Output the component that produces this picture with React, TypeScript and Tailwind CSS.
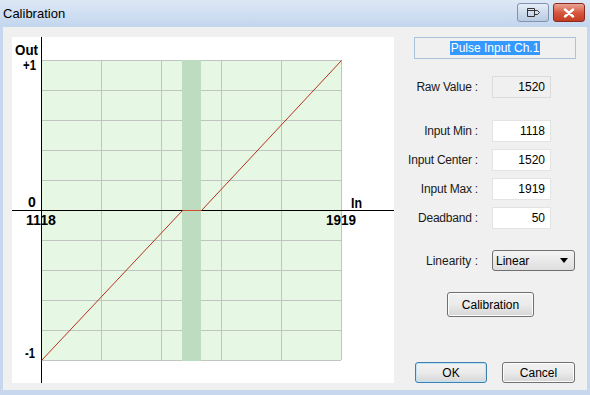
import React from "react";

const font = { fontFamily: '"Liberation Sans", Arial, sans-serif' };

// chart geometry (panel coordinates)
const X0 = 29;
const Y0 = 23;
const COL = 60;
const ROW = 30;

function Chart() {
  const vLines = [1, 2, 3, 4, 5].map((i) => X0 + i * COL);
  const hLines = Array.from({ length: 11 }, (_, i) => Y0 + i * ROW);

  return (
    <svg width="382" height="346" className="block">
      <rect x={X0} y={Y0} width={COL * 5} height={ROW * 10} fill="#e6f7e4" />
      {hLines.map((y) => (
        <line key={y} x1={X0} x2={X0 + COL * 5} y1={y + 0.5} y2={y + 0.5} stroke="#bfc6bf" />
      ))}
      {vLines.map((x) => (
        <line key={x} x1={x + 0.5} x2={x + 0.5} y1={Y0} y2={Y0 + ROW * 10} stroke="#bfc6bf" />
      ))}
      {/* deadband */}
      <rect x="170" y={Y0} width="19" height={ROW * 10 + 1} fill="#bedcbf" />

      {/* axes */}
      <line x1="29.5" x2="29.5" y1="0" y2="346" stroke="#000" />
      <line x1="0" x2="382" y1="173.5" y2="173.5" stroke="#000" />

      {/* response curve */}
      <polyline
        points="29.5,323.5 170.5,173.5 189.5,173.5 329.5,23.5"
        fill="none"
        stroke="#b8321f"
        strokeWidth="1"
      />
      <line x1="171" x2="189" y1="173.5" y2="173.5" stroke="#d0502f" />

      <g fontFamily='"Liberation Sans", Arial, sans-serif' fontWeight="bold" fontSize="14" fill="#000">
        <text x="3" y="18" textLength="23" lengthAdjust="spacingAndGlyphs">Out</text>
        <text x="11" y="33" textLength="13" lengthAdjust="spacingAndGlyphs">+1</text>
        <text x="16" y="170">0</text>
        <text x="14" y="188" textLength="30" lengthAdjust="spacingAndGlyphs">1118</text>
        <text x="314" y="188" textLength="30" lengthAdjust="spacingAndGlyphs">1919</text>
        <text x="339" y="171" textLength="11" lengthAdjust="spacingAndGlyphs">In</text>
        <text x="13" y="321" textLength="10" lengthAdjust="spacingAndGlyphs">-1</text>
      </g>
    </svg>
  );
}

function Field({ label, value, readOnly }: { label: string; value: string; readOnly?: boolean }) {
  return (
    <div className="flex items-center h-[22px]">
      <div className="w-[74px] text-right text-[12px] text-[#1a1a1a] whitespace-nowrap tracking-[-0.2px]">{label}</div>
      <div
        className={
          "ml-[14px] w-[59px] h-[22px] border flex items-center justify-end pr-[5px] text-[12px] text-black " +
          (readOnly ? "bg-[#f0f0f0] border-[#dcdcdc]" : "bg-white border-[#e3e3e3]")
        }
      >
        {value}
      </div>
    </div>
  );
}

function Button({ children, primary, className }: { children: React.ReactNode; primary?: boolean; className?: string }) {
  return (
    <div
      className={
        "flex items-center justify-center rounded-[3px] border text-[12px] text-black bg-gradient-to-b from-[#f2f2f2] via-[#ebebeb] to-[#d6d6d6] " +
        (primary ? "border-[#3c7fb1] shadow-[inset_0_0_0_1px_#bfe3f5]" : "border-[#707070] shadow-[inset_0_0_0_1px_#fcfcfc]") +
        " " +
        (className ?? "")
      }
    >
      {children}
    </div>
  );
}

export default function App() {
  return (
    <div className="w-[590px] h-[395px] bg-[#c7d8ee] flex flex-col overflow-hidden" style={font}>
      {/* Title bar */}
      <div className="h-[27px] shrink-0 flex items-center bg-gradient-to-b from-[#dde8f6] to-[#c3d6ee] pl-[3px] pr-[5px]">
        <span className="text-[13px] text-black">Calibration</span>
        <div className="ml-auto flex gap-[4px] self-start mt-[3px]">
          <div className="w-[32px] h-[19px] rounded-[3px] border border-[#7f93ad] bg-gradient-to-b from-[#e5edf7] to-[#b9cbe2] flex items-center justify-center">
            <svg width="14" height="11" viewBox="0 0 14 11">
              <path d="M1.5 1.5h7v8h-7z M1.5 3.5h7" fill="none" stroke="#333" />
              <path d="M9 3.5h2.5l2 2-2 2H9" fill="none" stroke="#333" />
            </svg>
          </div>
          <div className="w-[32px] h-[19px] rounded-[3px] border border-[#8b2b1d] bg-gradient-to-b from-[#e9a595] via-[#d6583f] to-[#c23b21] flex items-center justify-center">
            <svg width="12" height="10" viewBox="0 0 12 10">
              <path d="M2 1.5l8 7M10 1.5l-8 7" stroke="#fff" strokeWidth="2.4" strokeLinecap="round" />
            </svg>
          </div>
        </div>
      </div>

      {/* Client area */}
      <div className="mx-[3px] h-[363px] shrink-0 bg-[#f0f0f0] flex pl-[9px] pt-[10px]">
        <div className="w-[382px] h-[346px] bg-white">
          <Chart />
        </div>

        <div className="ml-[10px] w-[174px] flex flex-col">
          <div className="ml-[10px] w-[162px] h-[22px] border border-[#a9c3da] bg-[#f0f0f0] flex items-center justify-center">
            <span className="bg-[#3399ff] text-white text-[12px] leading-[14px] px-[1px]">Pulse Input Ch.1</span>
          </div>

          <div className="mt-[17px]">
            <Field label="Raw Value :" value="1520" readOnly />
          </div>

          <div className="mt-[22px] flex flex-col gap-[7px]">
            <Field label="Input Min :" value="1118" />
            <Field label="Input Center :" value="1520" />
            <Field label="Input Max :" value="1919" />
            <Field label="Deadband :" value="50" />
          </div>

          <div className="mt-[21px] flex items-center h-[21px]">
            <div className="w-[74px] text-right text-[12px] text-[#1a1a1a]">Linearity :</div>
            <div className="ml-[14px] w-[83px] h-[21px] rounded-[3px] border border-[#707070] bg-gradient-to-b from-[#f4f4f4] to-[#dedede] flex items-center pl-[3px] pr-[6px]">
              <span className="text-[12px] text-black">Linear</span>
              <svg className="ml-auto" width="8" height="5" viewBox="0 0 8 5">
                <path d="M0 0h8L4 5z" fill="#000" />
              </svg>
            </div>
          </div>

          <Button className="mt-[21px] ml-[43px] w-[87px] h-[25px]">Calibration</Button>

          <div className="mt-[45px] ml-[11px] flex gap-[15px]">
            <Button primary className="w-[72px] h-[21px]">OK</Button>
            <Button className="w-[73px] h-[21px]">Cancel</Button>
          </div>
        </div>
      </div>
    </div>
  );
}
